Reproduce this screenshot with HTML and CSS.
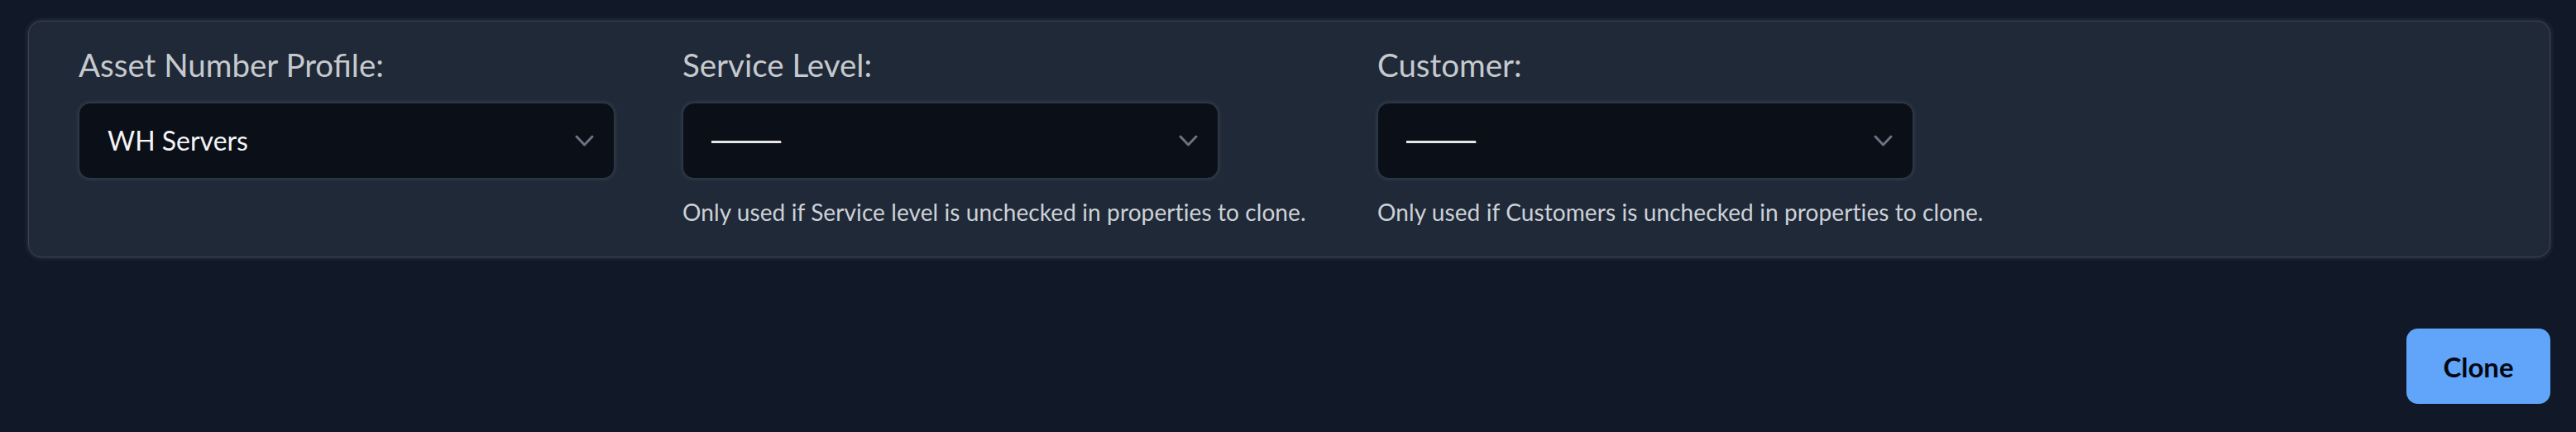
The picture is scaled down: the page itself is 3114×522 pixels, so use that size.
FILE: index.html
```html
<!DOCTYPE html>
<html lang="en">
<head>
<meta charset="utf-8">
<title>Clone</title>
<link rel="stylesheet" href="styles.css">
</head>
<body>
<div class="page">
  <section class="card">
    <div class="field">
      <label class="label">Asset Number Profile:</label>
      <div class="select">
        <span class="value">WH Servers</span>
        <svg class="chev" width="23" height="14" viewBox="0 0 23 14"><polyline points="2,2 11.5,12 21,2" fill="none" stroke="#6b7280" stroke-width="3" stroke-linecap="round" stroke-linejoin="round"/></svg>
      </div>
    </div>
    <div class="field">
      <label class="label">Service Level:</label>
      <div class="select">
        <span class="value empty">---------</span>
        <svg class="chev" width="23" height="14" viewBox="0 0 23 14"><polyline points="2,2 11.5,12 21,2" fill="none" stroke="#6b7280" stroke-width="3" stroke-linecap="round" stroke-linejoin="round"/></svg>
      </div>
      <p class="help">Only used if Service level is unchecked in properties to clone.</p>
    </div>
    <div class="field">
      <label class="label">Customer:</label>
      <div class="select">
        <span class="value empty">---------</span>
        <svg class="chev" width="23" height="14" viewBox="0 0 23 14"><polyline points="2,2 11.5,12 21,2" fill="none" stroke="#6b7280" stroke-width="3" stroke-linecap="round" stroke-linejoin="round"/></svg>
      </div>
      <p class="help">Only used if Customers is unchecked in properties to clone.</p>
    </div>
  </section>
  <div class="actions">
    <button class="btn">Clone</button>
  </div>
</div>
</body>
</html>
```

FILE: styles.css
```css
html, body {
  margin: 0;
  padding: 0;
  background: #111827;
}
body {
  font-family: Lato, "Noto Sans", sans-serif;
  color: #d1d5db;
}
.page {
  padding: 25px 31px 33px 34px;
  display: flex;
  flex-direction: column;
}
.card {
  background: #1f2937;
  border: 1px solid #3a4353;
  border-radius: 16px;
  box-shadow: 0 0 6px rgba(148, 163, 184, 0.28);
  padding: 29px 60px 37px 60px;
  display: grid;
  grid-template-columns: 648px 758px auto;
  column-gap: 82px;
  align-items: start;
}
.field {
  display: flex;
  flex-direction: column;
}
.label {
  font-size: 38.5px;
  line-height: 1.2;
  color: #c6c9ce;
  margin-bottom: 22.5px;
}
.select {
  width: 648px;
  height: 92px;
  box-sizing: border-box;
  background: #0b0f17;
  border: 1px solid #2e3644;
  border-radius: 14px;
  box-shadow: 0 0 5px rgba(148, 163, 184, 0.25);
  display: flex;
  align-items: center;
  justify-content: space-between;
  padding: 0 24px 0 34px;
}
.value {
  font-size: 32px;
  color: #f3f4f6;
}
.value.empty {
  color: #e5e7eb;
  letter-spacing: -2.6px;
  text-decoration: line-through;
  text-decoration-thickness: 3px;
  text-decoration-color: #e5e7eb;
}
.chev {
  display: block;
}
.help {
  margin: 24px 0 0 0;
  font-size: 28px;
  letter-spacing: 0.1px;
  line-height: 1.2;
  color: #cdd1d7;
  white-space: nowrap;
}
.actions {
  display: flex;
  justify-content: flex-end;
  margin-top: 86px;
}
.btn {
  width: 174px;
  height: 91px;
  border: none;
  border-radius: 14px;
  background: #60a5fa;
  color: #030712;
  font-family: Lato, "Noto Sans", sans-serif;
  font-weight: 700;
  font-size: 33px;
  padding: 0;
}
```
